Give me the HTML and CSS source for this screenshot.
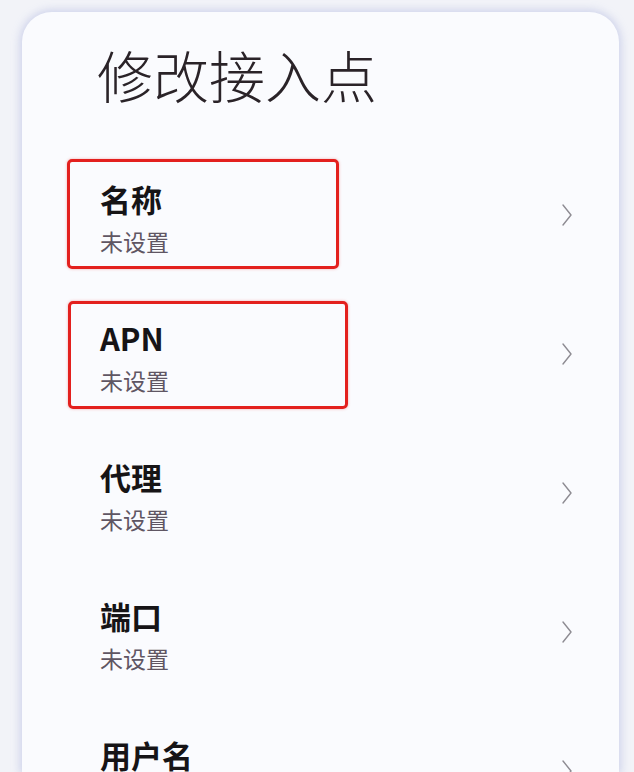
FILE: index.html
```html
<!DOCTYPE html>
<html lang="zh-CN">
<head>
<meta charset="utf-8">
<title>修改接入点</title>
<link rel="stylesheet" href="styles.css">
</head>
<body>
<div class="card">
  <h1 class="heading">修改接入点</h1>
  <ul class="list">
    <li class="row">
      <div class="text">
        <div class="label">名称</div>
        <div class="value">未设置</div>
      </div>
      <svg class="chev" viewBox="0 0 12 24" width="12" height="24"><path d="M2 2 L10 12 L2 22" /></svg>
      <span class="mark mark-1"></span>
    </li>
    <li class="row">
      <div class="text">
        <div class="label">APN</div>
        <div class="value">未设置</div>
      </div>
      <svg class="chev" viewBox="0 0 12 24" width="12" height="24"><path d="M2 2 L10 12 L2 22" /></svg>
      <span class="mark mark-2"></span>
    </li>
    <li class="row">
      <div class="text">
        <div class="label">代理</div>
        <div class="value">未设置</div>
      </div>
      <svg class="chev" viewBox="0 0 12 24" width="12" height="24"><path d="M2 2 L10 12 L2 22" /></svg>
    </li>
    <li class="row">
      <div class="text">
        <div class="label">端口</div>
        <div class="value">未设置</div>
      </div>
      <svg class="chev" viewBox="0 0 12 24" width="12" height="24"><path d="M2 2 L10 12 L2 22" /></svg>
    </li>
    <li class="row">
      <div class="text">
        <div class="label">用户名</div>
        <div class="value">未设置</div>
      </div>
      <svg class="chev" viewBox="0 0 12 24" width="12" height="24"><path d="M2 2 L10 12 L2 22" /></svg>
    </li>
  </ul>
</div>
</body>
</html>
```

FILE: styles.css
```css
html, body {
  margin: 0;
  padding: 0;
  height: 100%;
  overflow: hidden;
}
body {
  background: #f2f3f8;
  font-family: "Noto Sans CJK SC", "Noto Sans", sans-serif;
}
.card {
  margin: 12px 0 0 22px;
  width: 597px;
  height: 760px;
  overflow: hidden;
  background: #fafbfe;
  border-radius: 30px 30px 0 0;
  box-shadow: 0 0 8px 2px rgba(150, 160, 215, 0.4);
  padding-top: 34px;
  box-sizing: border-box;
}
.heading {
  margin: 0 0 48px 75px;
  font-size: 56px;
  line-height: 56px;
  font-weight: 300;
  color: #2a2328;
}
.list {
  list-style: none;
  margin: 0;
  padding: 0;
}
.row {
  position: relative;
  display: flex;
  align-items: center;
  justify-content: space-between;
  padding: 27px 46px 28px 78px;
  height: 139px;
  box-sizing: border-box;
}
.label {
  font-size: 31px;
  line-height: 44px;
  font-weight: 700;
  color: #161416;
}
.value {
  font-size: 23px;
  line-height: 40px;
  color: #5f5663;
}
.chev {
  margin-top: -8px;
  fill: none;
  stroke: #8d8b92;
  stroke-width: 1.4;
  stroke-linecap: round;
  stroke-linejoin: round;
}
.mark {
  position: absolute;
  border: 3px solid #e3201e;
  border-radius: 5px;
  box-sizing: border-box;
  box-shadow: 0 0 3px rgba(227, 32, 30, 0.35);
}
.mark-1 {
  left: 45px;
  top: 9px;
  width: 272px;
  height: 110px;
}
.mark-2 {
  left: 46px;
  top: 12px;
  width: 280px;
  height: 108px;
}
```
